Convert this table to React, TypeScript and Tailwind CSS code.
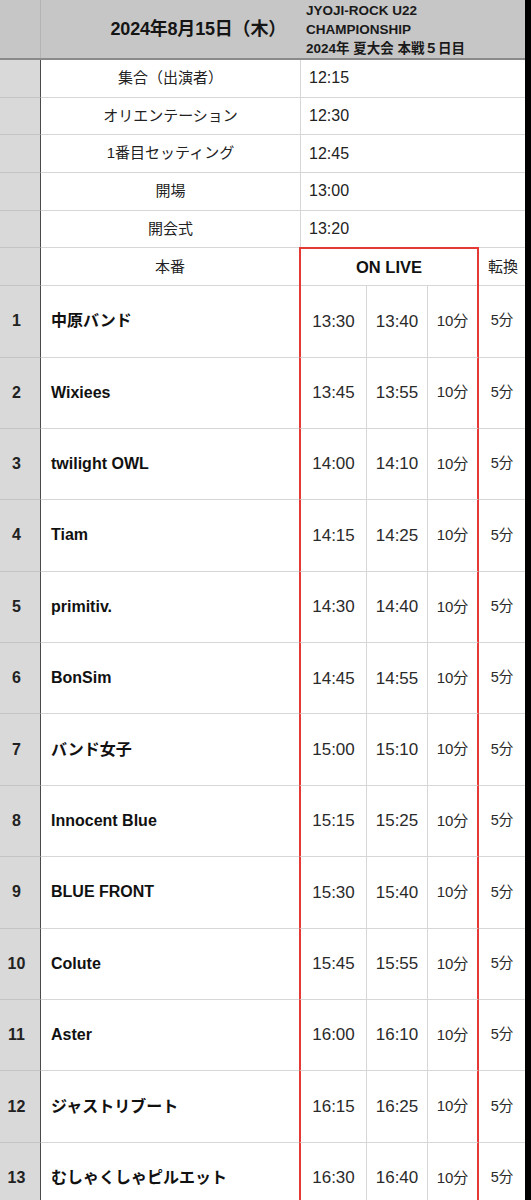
const bands = [
  { no: 1, name: '中原バンド', start: '13:30', end: '13:40' },
  { no: 2, name: 'Wixiees', start: '13:45', end: '13:55' },
  { no: 3, name: 'twilight OWL', start: '14:00', end: '14:10' },
  { no: 4, name: 'Tiam', start: '14:15', end: '14:25' },
  { no: 5, name: 'primitiv.', start: '14:30', end: '14:40' },
  { no: 6, name: 'BonSim', start: '14:45', end: '14:55' },
  { no: 7, name: 'バンド女子', start: '15:00', end: '15:10' },
  { no: 8, name: 'Innocent Blue', start: '15:15', end: '15:25' },
  { no: 9, name: 'BLUE FRONT', start: '15:30', end: '15:40' },
  { no: 10, name: 'Colute', start: '15:45', end: '15:55' },
  { no: 11, name: 'Aster', start: '16:00', end: '16:10' },
  { no: 12, name: 'ジャストリブート', start: '16:15', end: '16:25' },
  { no: 13, name: 'むしゃくしゃピルエット', start: '16:30', end: '16:40' },
];

const prelude = [
  { label: '集合（出演者）', time: '12:15' },
  { label: 'オリエンテーション', time: '12:30' },
  { label: '1番目セッティング', time: '12:45' },
  { label: '開場', time: '13:00' },
  { label: '開会式', time: '13:20' },
];

export default function App() {
  return (
    <div
      className="flex w-[531px] h-[1200px] overflow-hidden bg-black text-[#1c1c1c]"
      style={{ fontFamily: "'Liberation Sans', 'Noto Sans CJK JP', sans-serif" }}
    >
      <div className="w-[525px] shrink-0 bg-white">
        {/* Header */}
        <div className="flex h-[60px] bg-[#c6c6c6] border-b-2 border-b-[#8a8a8a]">
          <div className="w-[41px] shrink-0 border-r border-r-[#b3b3b3]" />
          <div className="w-[259px] shrink-0 flex items-center justify-end pr-[14px] pt-[1px]">
            <span className="text-[18px] font-bold tracking-[-0.2px] text-[#151515]">2024年8月15日（木）</span>
          </div>
          <div className="flex-1 pl-[6px] pt-[1px] text-[13.5px] font-bold leading-[19px] text-[#1a1a1a]">
            <div>JYOJI-ROCK U22</div>
            <div>CHAMPIONSHIP</div>
            <div>2024年 夏大会 本戦５日目</div>
          </div>
        </div>

        {/* Prelude rows */}
        {prelude.map((r) => (
          <div key={r.label} className="flex h-[37.7px]">
            <div className="w-[41px] shrink-0 bg-[#d9d9d9] border-r border-r-[#4a4a4a] border-b border-b-[#c4c4c4]" />
            <div className="w-[259px] shrink-0 flex items-center justify-center border-b border-b-[#d6d6d6] text-[15px] text-[#222]">
              {r.label}
            </div>
            <div className="flex-1 flex items-center pl-[8px] border-l border-l-[#d6d6d6] border-b border-b-[#d6d6d6] text-[16px] text-[#222]">
              {r.time}
            </div>
          </div>
        ))}

        {/* 本番 row */}
        <div className="flex h-[37.7px]">
          <div className="w-[41px] shrink-0 bg-[#d9d9d9] border-r border-r-[#4a4a4a] border-b border-b-[#c4c4c4]" />
          <div className="w-[258px] shrink-0 flex items-center justify-center border-b border-b-[#d6d6d6] text-[15px] text-[#222]">
            本番
          </div>
          <div className="w-[180px] shrink-0 flex items-center justify-center border-2 border-[#e53935] border-b-0 -mt-[1px] font-bold text-[16.5px] text-[#111]">
            <span className="w-full h-full flex items-center justify-center border-b border-b-[#d6d6d6]">ON LIVE</span>
          </div>
          <div className="flex-1 flex items-center pl-[9px] border-b border-b-[#d6d6d6] text-[15px] text-[#222]">
            転換
          </div>
        </div>

        {/* Band rows */}
        {bands.map((b) => (
          <div key={b.no} className="flex h-[71.4px]">
            <div className="w-[41px] shrink-0 flex items-center justify-center pr-[7px] bg-[#d9d9d9] border-r border-r-[#4a4a4a] border-b border-b-[#c4c4c4] font-bold text-[16px] text-[#222]">
              {b.no}
            </div>
            <div className="w-[258px] shrink-0 flex items-center pl-[10px] border-b border-b-[#d6d6d6] font-bold text-[16px] text-[#111] whitespace-nowrap">
              {b.name}
            </div>
            <div className="w-[67px] shrink-0 flex items-center justify-center border-l-2 border-l-[#e53935] border-b border-b-[#d6d6d6] text-[17px] text-[#2a2a2a]">
              {b.start}
            </div>
            <div className="w-[61px] shrink-0 flex items-center justify-center border-l border-l-[#d6d6d6] border-b border-b-[#d6d6d6] text-[17px] text-[#2a2a2a]">
              {b.end}
            </div>
            <div className="w-[52px] shrink-0 flex items-center justify-center border-l border-l-[#d6d6d6] border-r-2 border-r-[#e53935] border-b border-b-[#d6d6d6] text-[15px] text-[#2a2a2a]">
              10分
            </div>
            <div className="flex-1 flex items-center justify-center border-b border-b-[#d6d6d6] text-[14.5px] text-[#2a2a2a]">
              5分
            </div>
          </div>
        ))}
      </div>
      <div className="flex-1 bg-black" />
    </div>
  );
}
